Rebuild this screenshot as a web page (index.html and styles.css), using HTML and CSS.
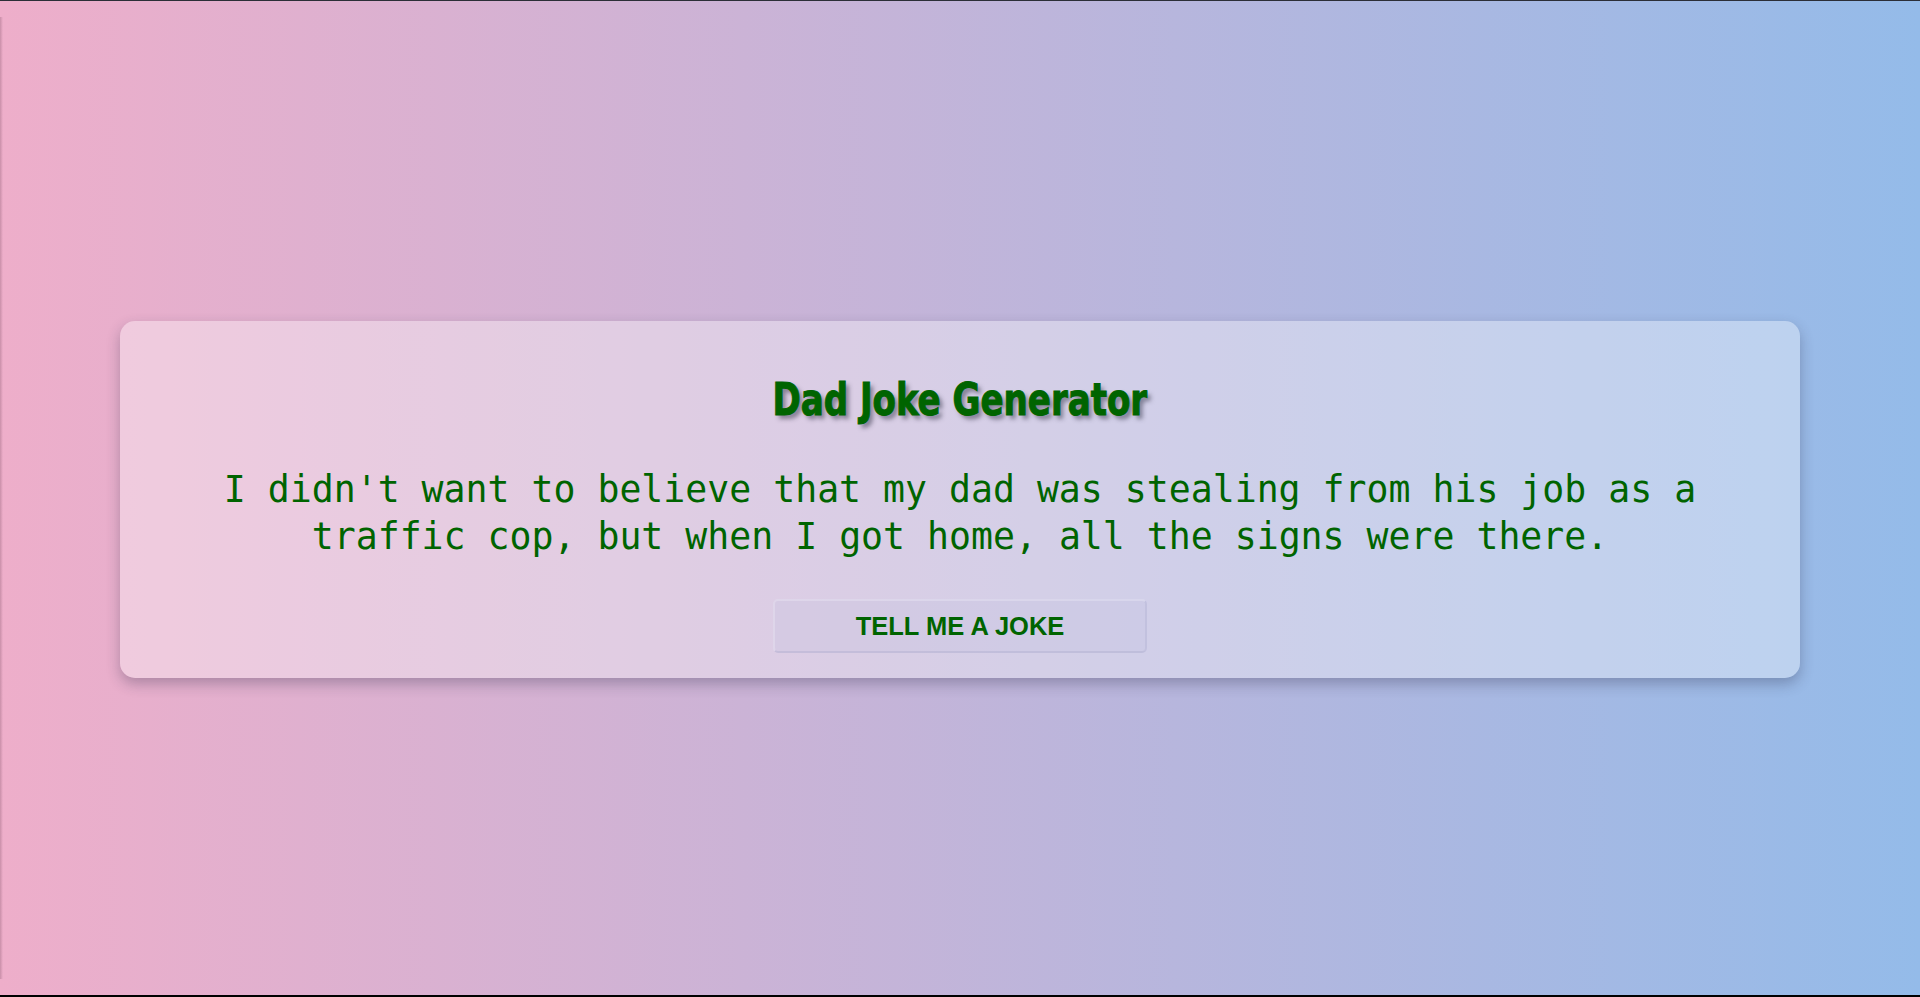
FILE: index.html
```html
<!DOCTYPE html>
<html lang="en">
<head>
<meta charset="utf-8">
<title>Dad Joke Generator</title>
<link rel="stylesheet" href="styles.css">
</head>
<body>
<div class="page">
  <main class="card">
    <h1 class="title">Dad Joke Generator</h1>
    <p class="joke">I didn't want to believe that my dad was stealing from his job as a traffic cop, but when I got home, all the signs were there.</p>
    <button class="btn" type="button">TELL ME A JOKE</button>
  </main>
</div>
</body>
</html>
```

FILE: styles.css
```css
html, body {
  margin: 0;
  padding: 0;
  height: 100%;
}

body {
  background: #000;
}

.page {
  box-sizing: border-box;
  height: 995px;
  border-top: 1px solid #2b2e37;
  background: linear-gradient(90deg, #eeaeca 0%, #94bbe9 100%);
  display: flex;
  align-items: center;
  justify-content: center;
  position: relative;
}

.page::before {
  content: "";
  position: absolute;
  left: 0;
  top: 16px;
  bottom: 16px;
  width: 3px;
  background: linear-gradient(90deg, rgba(90, 50, 70, 0.25), rgba(90, 50, 70, 0));
}

.card {
  box-sizing: border-box;
  width: 1680px;
  height: 357px;
  margin-top: 2px;
  padding: 57px 40px 25px;
  border-radius: 15px;
  background: rgba(255, 255, 255, 0.35);
  box-shadow: 0 6px 14px rgba(40, 40, 70, 0.3);
  display: flex;
  flex-direction: column;
  align-items: center;
  text-align: center;
}

.title {
  margin: 0;
  font-family: "DejaVu Sans Condensed", "Liberation Sans", sans-serif;
  font-weight: 700;
  font-size: 44px;
  line-height: 44px;
  letter-spacing: 0;
  white-space: nowrap;
  color: #006400;
  -webkit-text-stroke: 1px #006400;
  text-shadow: 4px 4px 5px rgba(50, 50, 70, 0.5);
  transform: scaleX(0.86);
}

.joke {
  margin: 44px 0 0;
  font-family: "DejaVu Sans Mono", "Liberation Mono", monospace;
  font-size: 36.5px;
  line-height: 47px;
  color: #006400;
}

.btn {
  margin-top: 39px;
  box-sizing: border-box;
  width: 374px;
  height: 54px;
  padding: 10px 0;
  border: 2px solid rgba(255, 255, 255, 0.22);
  border-bottom-color: rgba(150, 150, 190, 0.25);
  border-right-color: rgba(150, 150, 190, 0.2);
  border-radius: 5px;
  background: rgba(190, 190, 225, 0.22);
  font-family: "Liberation Sans", Arial, sans-serif;
  font-weight: 700;
  font-size: 25.5px;
  line-height: 30px;
  color: #006400;
  cursor: pointer;
}
```
